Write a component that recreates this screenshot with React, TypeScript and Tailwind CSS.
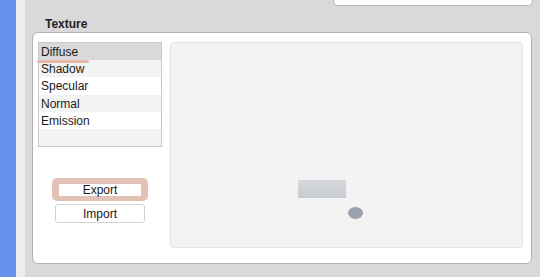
const channels = ["Diffuse", "Shadow", "Specular", "Normal", "Emission", ""];

export default function App() {
  return (
    <div
      className="flex w-[540px] h-[277px] overflow-hidden text-[#1a1a1a]"
      style={{ fontFamily: '"Liberation Sans", Arial, sans-serif' }}
    >
      <div className="w-[16px] bg-[#6892ec]" />
      <div className="w-[9px] bg-[#ededed]" />
      <div className="flex-1 flex flex-col bg-[#d9d9d9] pl-[7px] pr-[8px]">
        <div className="flex justify-end">
          <div className="w-[200px] h-[6px] bg-white border-x border-b border-[#b4b4b4] rounded-b-[5px] -mr-[1px]" />
        </div>
        <div className="h-[26px] pl-[13px] pt-[11px] text-[12px] font-bold leading-[14px] text-[#222]">
          Texture
        </div>
        <div className="h-[232px] bg-white border border-[#b2b2b2] rounded-[6px] flex gap-[8px] pt-[9px] pl-[5px] pr-[8px] pb-[15px]">
          <div className="w-[124px] flex flex-col">
            <div className="relative border border-[#c9c9c9]">
              {channels.map((name, i) => (
                <div
                  key={i}
                  className={
                    "h-[17.2px] pl-[2px] pt-[2px] text-[12px] leading-[15px] " +
                    (i === 0 ? "bg-[#d9d9d9]" : i % 2 === 1 ? "bg-[#f3f3f3]" : "bg-white")
                  }
                >
                  {name}
                </div>
              ))}
              <div className="absolute left-[-2px] top-[17px] w-[52px] h-[3px] rounded-full bg-[#e6b7a6]" />
            </div>
            <div className="flex flex-col items-center mt-[31px] gap-[3px]">
              <div className="w-[96px] h-[23px] rounded-[5px] bg-[#e3c2b6] flex items-center justify-center">
                <div className="w-[82px] h-[12px] bg-white flex items-center justify-center text-[12px] leading-[12px]">
                  Export
                </div>
              </div>
              <div className="w-[90px] h-[19px] bg-white border border-[#d2d2d2] rounded-[3px] flex items-center justify-center text-[12px] leading-[12px]">
                Import
              </div>
            </div>
          </div>
          <div className="relative flex-1 bg-[#f3f3f3] border border-[#e4e4e4] rounded-[4px]">
            <div className="absolute left-[127px] top-[137px] w-[48px] h-[18px] bg-gradient-to-b from-[#d2d5da] to-[#c3c7cd] opacity-90" />
            <div className="absolute left-[177px] top-[164px] w-[15px] h-[12px] rounded-[50%] bg-[#9ca2ad] blur-[0.5px]" />
          </div>
        </div>
      </div>
    </div>
  );
}
